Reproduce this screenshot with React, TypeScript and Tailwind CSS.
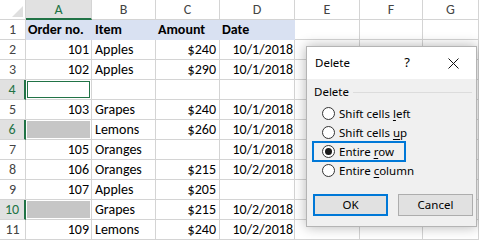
import React from "react";

type Row = { n: number; a: string; b: string; c: string; d: string };

const data: Row[] = [
  { n: 2, a: "101", b: "Apples", c: "$240", d: "10/1/2018" },
  { n: 3, a: "102", b: "Apples", c: "$290", d: "10/1/2018" },
  { n: 4, a: "", b: "", c: "", d: "" },
  { n: 5, a: "103", b: "Grapes", c: "$240", d: "10/1/2018" },
  { n: 6, a: "", b: "Lemons", c: "$260", d: "10/1/2018" },
  { n: 7, a: "105", b: "Oranges", c: "", d: "10/1/2018" },
  { n: 8, a: "106", b: "Oranges", c: "$215", d: "10/2/2018" },
  { n: 9, a: "107", b: "Apples", c: "$205", d: "" },
  { n: 10, a: "", b: "Grapes", c: "$215", d: "10/2/2018" },
  { n: 11, a: "109", b: "Lemons", c: "$240", d: "10/2/2018" },
];

const selRows = [4, 6, 10];

const cell = "h-[20px] border-r border-b border-[#d4d4d4] flex items-center overflow-hidden whitespace-nowrap";
const head = "h-[20px] border-r border-b border-[#d4d4d4] flex items-center justify-center text-[#444444]";

function Radio({ checked }: { checked?: boolean }) {
  return (
    <span className="w-[13px] h-[13px] rounded-full border border-[#333333] bg-white flex items-center justify-center shrink-0">
      {checked ? <span className="w-[7px] h-[7px] rounded-full bg-[#1a1a1a]" /> : null}
    </span>
  );
}

export default function App() {
  return (
    <div className="relative w-[479px] h-[240px] overflow-hidden bg-white" style={{ fontFamily: "Carlito, Calibri, Lato, sans-serif" }}>
      <div className="grid grid-cols-[26px_66px_64px_64px_75px_65px_63px_56px] text-[14px] text-black">
        {/* header row */}
        <div className="h-[20px] border-r border-b border-[#d4d4d4] relative">
          <svg width="26" height="20" className="absolute left-0 top-0">
            <polygon points="23,6 23,17 12,17" fill="#dfdfdf" />
          </svg>
        </div>
        <div className="h-[20px] border-r border-b-2 border-r-[#d4d4d4] border-b-[#217346] bg-[#e1e1e1] flex items-center justify-center text-[#217346]">A</div>
        <div className={head}>B</div>
        <div className={head}>C</div>
        <div className={head}>D</div>
        <div className={head}>E</div>
        <div className={head}>F</div>
        <div className={head}>G</div>

        {/* row 1 */}
        <div className={head}>1</div>
        <div className="h-[20px] border-r border-b border-[#d9e1f2] bg-[#d9e1f2] flex items-center pl-[2px] font-bold whitespace-nowrap">Order no.</div>
        <div className="h-[20px] border-r border-b border-[#d9e1f2] bg-[#d9e1f2] flex items-center pl-[3px] font-bold">Item</div>
        <div className="h-[20px] border-r border-b border-[#d9e1f2] bg-[#d9e1f2] flex items-center pl-[2px] font-bold">Amount</div>
        <div className="h-[20px] border-r border-b border-[#d9e1f2] bg-[#d9e1f2] flex items-center pl-[2px] font-bold">Date</div>
        <div className={cell} />
        <div className={cell} />
        <div className={cell} />

        {data.map((r) => {
          const sel = selRows.includes(r.n);
          return (
            <React.Fragment key={r.n}>
              {sel ? (
                <div className="h-[20px] border-r-2 border-b border-r-[#217346] border-b-[#d4d4d4] bg-[#e1e1e1] flex items-center justify-center text-[#217346]">
                  {r.n}
                </div>
              ) : (
                <div className={head}>{r.n}</div>
              )}
              {r.n === 4 ? (
                <div className={cell + " p-[1px]"}>
                  <div className="w-full h-full border border-[#217346] bg-white" />
                </div>
              ) : sel ? (
                <div className={cell + " p-[1px]"}>
                  <div className="w-full h-full bg-[#c6c6c6]" />
                </div>
              ) : (
                <div className={cell + " justify-end pr-[2px]"}>{r.a}</div>
              )}
              <div className={cell + " pl-[3px]"}>{r.b}</div>
              <div className={cell + " justify-end pr-[3px]"}>{r.c}</div>
              <div className={cell + " justify-end pr-[1px]"}>{r.d}</div>
              <div className={cell} />
              <div className={cell} />
              <div className={cell} />
            </React.Fragment>
          );
        })}
      </div>

      {/* Delete dialog */}
      <div
        className="absolute left-[306px] top-[46px] w-[171px] h-[181px] border border-[#b4b4b4] bg-white shadow-[0_0_12px_rgba(0,0,0,0.3)] flex flex-col text-[11.5px] text-black"
        style={{ fontFamily: "'Segoe UI', 'Noto Sans', sans-serif" }}
      >
        <div className="h-[32px] flex items-center shrink-0">
          <span className="flex-1 pl-[8px]">Delete</span>
          <span className="w-[46px] h-full flex items-center justify-center text-[13px]">?</span>
          <span className="w-[46px] h-full flex items-center justify-center">
            <svg width="11" height="11" viewBox="0 0 11 11">
              <path d="M0.5 0.5 L10.5 10.5 M10.5 0.5 L0.5 10.5" stroke="#111" strokeWidth="1" />
            </svg>
          </span>
        </div>
        <div className="flex-1 bg-[#f0f0f0] flex flex-col">
          <div className="flex items-center pl-[7px] pr-[4px] mt-[5px] h-[16px] gap-[4px]">
            <span>Delete</span>
            <span className="flex-1 h-px bg-[#dcdcdc]" />
          </div>
          <div className="flex flex-col mt-[4px]">
            <div className="h-[19px] flex items-center pl-[15px] gap-[4px]">
              <Radio />
              <span>Shift cells <span className="underline underline-offset-2">l</span>eft</span>
            </div>
            <div className="h-[19px] flex items-center pl-[15px] gap-[4px]">
              <Radio />
              <span>Shift cells <span className="underline underline-offset-2">u</span>p</span>
            </div>
            <div className="h-[19px] flex items-center pl-[15px] gap-[4px] relative">
              <span className="absolute left-[5px] top-[-1px] w-[94px] h-[21px] border-2 border-[#0078d7]" />
              <Radio checked />
              <span>Entire <span className="underline underline-offset-2">r</span>ow</span>
            </div>
            <div className="h-[19px] flex items-center pl-[15px] gap-[4px]">
              <Radio />
              <span>Entire <span className="underline underline-offset-2">c</span>olumn</span>
            </div>
          </div>
          <div className="flex pl-[6px] gap-[10px] mt-[14px]">
            <div className="w-[75px] h-[22px] border-2 border-[#0078d7] bg-[#e1e1e1] flex items-center justify-center">OK</div>
            <div className="w-[75px] h-[22px] border border-[#adadad] bg-[#e1e1e1] flex items-center justify-center">Cancel</div>
          </div>
        </div>
      </div>
    </div>
  );
}
